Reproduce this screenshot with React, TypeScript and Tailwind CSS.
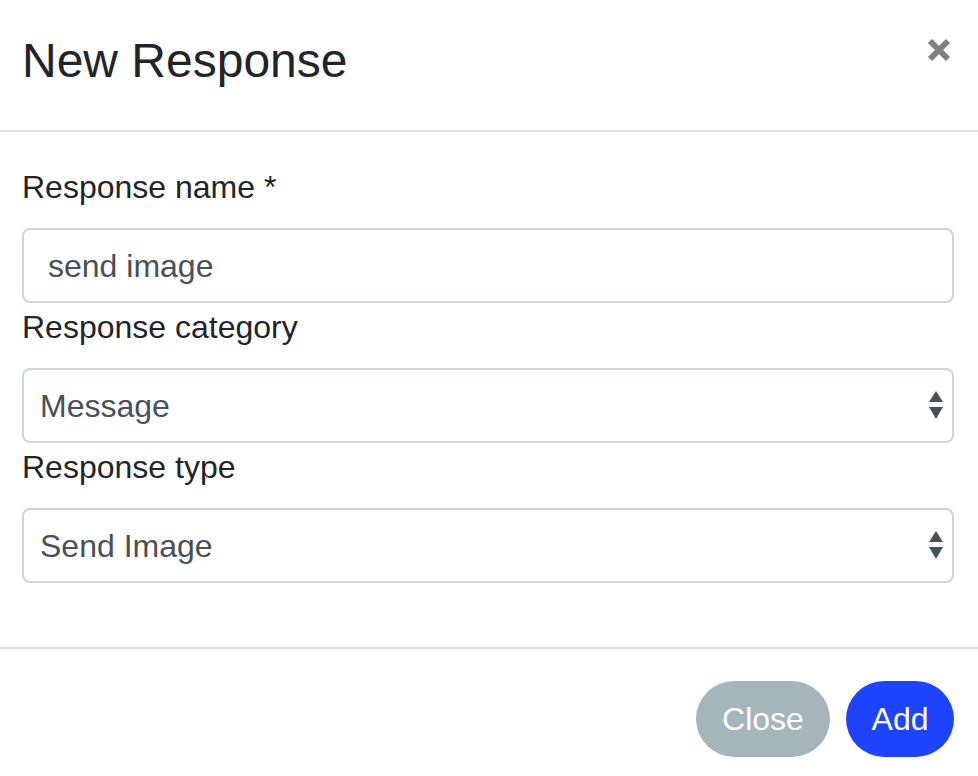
export default function App() {
  const font = { fontFamily: '"Liberation Sans", Arial, sans-serif' };

  return (
    <div className="w-[978px] h-[776px] bg-white overflow-hidden text-[#212529]" style={font}>
      {/* header */}
      <div className="h-[132px] border-b-2 border-[#dee2e6] flex items-start justify-between pl-[22px] pr-[26px] pt-[32px]">
        <h5 className="text-[48px] leading-[1.2] font-normal">New Response</h5>
        <button className="mt-[5px] w-[26px] h-[26px] flex items-center justify-center">
          <svg width="24" height="24" viewBox="0 0 24 24">
            <path d="M3 3L21 21M21 3L3 21" stroke="#808080" strokeWidth="6" strokeLinecap="butt" />
          </svg>
        </button>
      </div>

      {/* body */}
      <div className="pl-[22px] pr-[24px] pt-[31px] pb-[64px] border-b-2 border-[#dee2e6]">
        <label className="block text-[32px] leading-[48px] mb-[17px]">Response name *</label>
        <div className="h-[75px] border-2 border-[#ced4da] rounded-[8px] flex items-center pl-[24px] text-[32px] text-[#495057]">
          send image
        </div>

        <label className="block text-[32px] leading-[48px] mb-[17px]">Response category</label>
        <SelectBox value="Message" />

        <label className="block text-[32px] leading-[48px] mb-[17px]">Response type</label>
        <SelectBox value="Send Image" />
      </div>

      {/* footer */}
      <div className="flex justify-end gap-[16px] pt-[32px] pr-[24px]">
        <button className="h-[76px] w-[134px] rounded-full bg-[#a4b6b9] text-white text-[32px]">Close</button>
        <button className="h-[76px] w-[108px] rounded-full bg-[#1f44ff] text-white text-[32px]">Add</button>
      </div>
    </div>
  );
}

function SelectBox({ value }: { value: string }) {
  return (
    <div className="h-[75px] border-2 border-[#ced4da] rounded-[8px] flex items-center justify-between pl-[16px] pr-[8px] text-[32px] text-[#495057]">
      <span>{value}</span>
      <svg width="16" height="30" viewBox="0 0 16 30">
        <path d="M8 0L15 11H1Z" fill="#495057" />
        <path d="M1 16H15L8 28Z" fill="#495057" />
      </svg>
    </div>
  );
}
